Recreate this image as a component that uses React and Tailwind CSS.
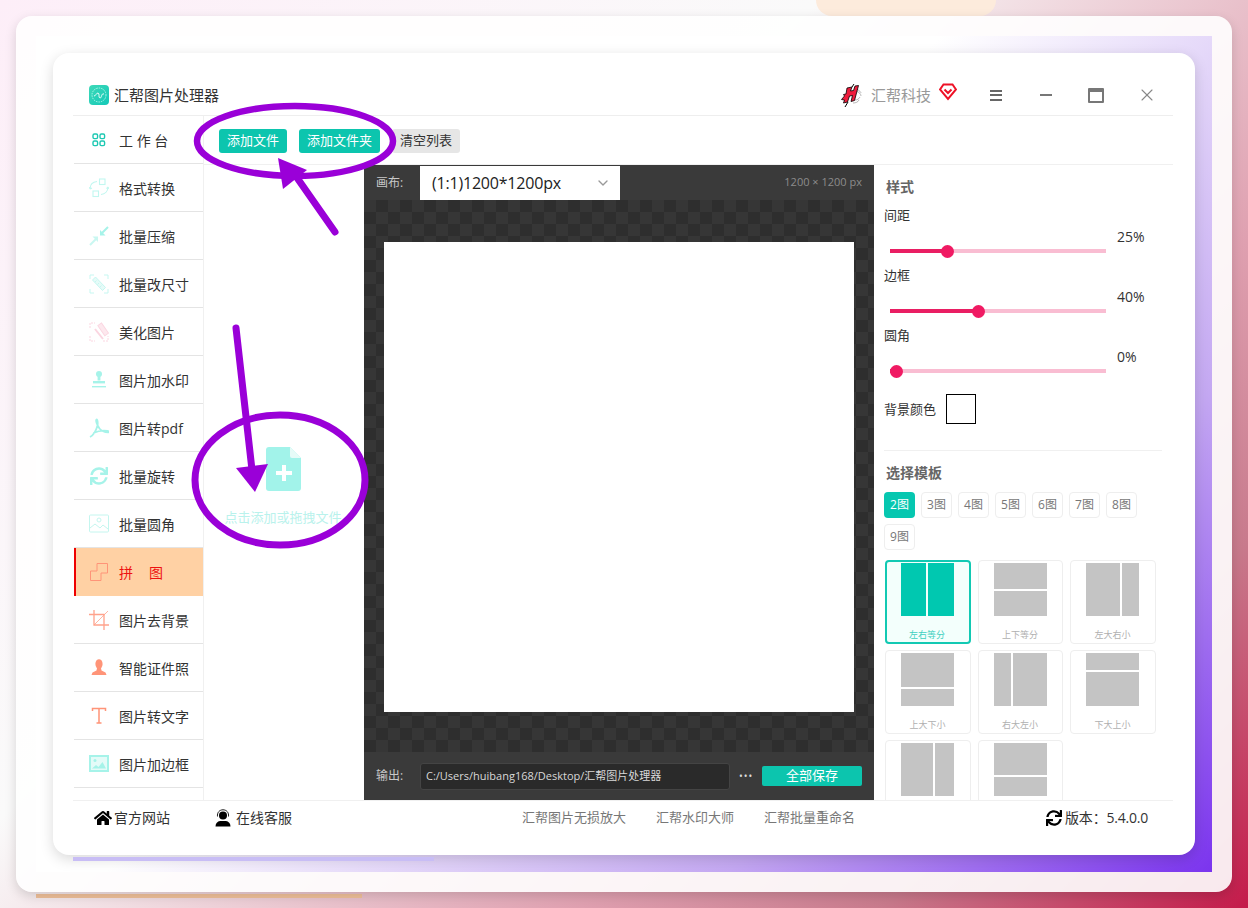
import React from "react";
import { FaSync, FaHome } from "react-icons/fa";
import { ChevronDown, X } from "lucide-react";

const PALE = "#a6f3e9";
const ORANGE = "#ff9478";

// sidebar icons
const GridIcon = () => (
  <svg width="20" height="20" viewBox="0 0 20 20" fill="none" stroke="#1cc8b2" strokeWidth="1.4">
    <rect x="4" y="4" width="4.6" height="4.6" rx="1.4" />
    <rect x="11" y="4" width="4.6" height="4.6" rx="1.4" />
    <rect x="4" y="11" width="4.6" height="4.6" rx="1.4" />
    <rect x="11" y="11" width="4.6" height="4.6" rx="1.4" />
  </svg>
);
const ConvertIcon = () => (
  <svg width="20" height="20" viewBox="0 0 20 20" fill="none" stroke="#c2f7f0" strokeWidth="1.1">
    <rect x="10.5" y="1" width="5.5" height="5.5" />
    <rect x="4" y="13" width="5.5" height="5.5" />
    <path d="M8 3.5C3.5 4 1 7 1.2 11M1.2 11l-1-1.8M1.2 11l1.8-1" />
    <path d="M12 16.500c4-.5 7-3.500 7-7.500M19 9l-1.500 1.600M19 9l1 1.800" />
  </svg>
);
const CompressIcon = () => (
  <svg width="20" height="20" viewBox="0 0 20 20" fill={PALE} stroke={PALE}>
    <path d="M19 1l-6 6" strokeWidth="2" />
    <path d="M11 9.500V4l5.500 5.500z" stroke="none" />
    <g opacity=".6">
      <path d="M1 19l6-6" strokeWidth="2" />
      <path d="M9 10.500V16l-5.500-5.500z" stroke="none" />
    </g>
  </svg>
);
const ResizeIcon = () => (
  <svg width="20" height="20" viewBox="0 0 20 20" fill="none" stroke="#c6f7f1" strokeWidth="1">
    <path d="M1 5V1h4M15 1h4v4M1 15v4h4M15 19h4v-4" />
    <path d="M3.500 6l3-3 10 10.500-3 3z" fill="#e6fbf8" />
    <path d="M6 8l1.500-1.500M8.500 10.500L10 9M11 13l1.500-1.500" />
  </svg>
);
const WandIcon = () => (
  <svg width="20" height="20" viewBox="0 0 20 20" fill="none" stroke="#fbd6e1" strokeWidth="1">
    <path d="M1 6V1h5M1 14v5h5M14 19h5v-5" strokeDasharray="2 1" />
    <path d="M9.500 3l4-2.200 5.500 11-4 2.200z" transform="rotate(-8 14 8)" fill="#fde8ee" />
    <path d="M6 7l8 10" strokeWidth="2" />
  </svg>
);
const StampIcon = () => (
  <svg width="20" height="20" viewBox="0 0 20 20" fill={PALE}>
    <circle cx="10" cy="4" r="3" />
    <path d="M8.600 6h2.800v4.500H8.600z" />
    <path d="M4 11h12v2.400H4z" />
    <path d="M3 16h14v1.400H3z" />
  </svg>
);
const PdfIcon = () => (
  <svg width="20" height="20" viewBox="0 0 20 20" fill="none" stroke={PALE} strokeWidth="1.800">
    <path d="M1 19c3-1.500 6-6 7.500-11.500C9 5 8.500 1 7.500 1.500 6.300 2.200 8 7 10.500 10.500c2 2.500 6 3.800 8.500 3.800 1 0 .8-1.300-.6-1.500-4-.6-10 .3-14 2.200" />
  </svg>
);
const PictureIcon = () => (
  <svg width="20" height="20" viewBox="0 0 20 20" fill="none" stroke="#c4f6ef" strokeWidth="1">
    <rect x=".5" y="1" width="19" height="17" rx="1" />
    <circle cx="10" cy="6" r="2" />
    <path d="M1 14l5-4 5 4 3-3 5 4" />
  </svg>
);
const PuzzleIcon = () => (
  <svg width="20" height="20" viewBox="0 0 20 20" fill="none" stroke={ORANGE} strokeWidth="1">
    <path d="M8 1.500h10.500v9.500H12V18.500H1.500V9H8z" />
  </svg>
);
const CropIcon = () => (
  <svg width="20" height="20" viewBox="0 0 20 20" fill="none" stroke="#ffa28c" strokeWidth="1.300">
    <path d="M5 0v15h15" />
    <path d="M0 4.500h15V20" />
    <path d="M5 15L19 1" strokeWidth=".8" />
  </svg>
);
const PersonIcon = () => (
  <svg width="20" height="20" viewBox="0 0 20 20" fill={ORANGE}>
    <ellipse cx="10" cy="6" rx="3.600" ry="4.800" />
    <path d="M8 10h4l.5 2.500 4 2 1 2.500H2.500l1-2.500 4-2z" />
  </svg>
);
const SerifT = () => (
  <svg width="20" height="20" viewBox="0 0 20 20" fill="none" stroke={ORANGE} strokeWidth="1.500">
    <path d="M3.500 5V2.500h13V5M10 2.500v14.500M7.500 17h5" />
  </svg>
);
const FramedPicture = () => (
  <svg width="20" height="20" viewBox="0 0 20 20">
    <rect x="0" y="1" width="20" height="17" fill={PALE} />
    <rect x="2" y="3" width="16" height="13" fill="#e4fbf8" />
    <path d="M3 14.500l4-3.500 2.500 2 4-5 3.500 6.500z" fill={PALE} />
    <circle cx="6" cy="6.500" r="1.500" fill={PALE} />
  </svg>
);

const menu = [
  { name: "工 作 台", icon: <GridIcon /> },
  { name: "格式转换", icon: <ConvertIcon /> },
  { name: "批量压缩", icon: <CompressIcon /> },
  { name: "批量改尺寸", icon: <ResizeIcon /> },
  { name: "美化图片", icon: <WandIcon /> },
  { name: "图片加水印", icon: <StampIcon /> },
  { name: "图片转pdf", icon: <PdfIcon /> },
  { name: "批量旋转", icon: <FaSync size={18} color={PALE} /> },
  { name: "批量圆角", icon: <PictureIcon /> },
  { name: "拼图", icon: <PuzzleIcon />, active: true },
  { name: "图片去背景", icon: <CropIcon /> },
  { name: "智能证件照", icon: <PersonIcon /> },
  { name: "图片转文字", icon: <SerifT /> },
  { name: "图片加边框", icon: <FramedPicture /> },
];

const sliders = [
  { label: "间距", value: 25, fill: "w-[57px]", thumb: "left-[51px]" },
  { label: "边框", value: 40, fill: "w-[88px]", thumb: "left-[82px]" },
  { label: "圆角", value: 0, fill: "w-[6px]", thumb: "left-0" },
];

const counts = ["2图", "3图", "4图", "5图", "6图", "7图", "8图", "9图"];

const templates = [
  { name: "左右等分", dir: "flex-row", a: "flex-1", b: "flex-1", active: true },
  { name: "上下等分", dir: "flex-col", a: "flex-1", b: "flex-1" },
  { name: "左大右小", dir: "flex-row", a: "flex-[2]", b: "flex-1" },
  { name: "上大下小", dir: "flex-col", a: "flex-[2]", b: "flex-1" },
  { name: "右大左小", dir: "flex-row", a: "flex-1", b: "flex-[2]" },
  { name: "下大上小", dir: "flex-col", a: "flex-1", b: "flex-[2]" },
  { name: "", dir: "flex-row", a: "flex-[31]", b: "flex-[19]" },
  { name: "", dir: "flex-col", a: "flex-[31]", b: "flex-[19]" },
];

const HeadsetUser = () => (
  <svg width="18" height="18" viewBox="0 0 18 18">
    <circle cx="9" cy="6.500" r="4" fill="#000" />
    <path d="M3.500 7.500C3 3.500 5.500.8 9 .8s6 2.700 5.500 6.700" fill="none" stroke="#000" strokeWidth=".9" />
    <path d="M1.500 17.500c0-3.500 2-5 4.500-5.500h6c2.500.5 4.500 2 4.500 5.500z" fill="#000" />
  </svg>
);

const BrandLogo = () => (
  <svg width="23" height="25" viewBox="0 0 23 25">
    <path d="M17 8c3 1 5 3 5 5M15 5c4 1 7 4 7 5M16 17c2 0 4-1 5-3M14 20c3 0 5-1 6-3" fill="none" stroke="#999" strokeWidth=".7" />
    <path d="M8 5l5-1-1.500 4 3-.5 1.500-4.500 3.500-.5-4 15-3.500 1 1.500-6-3 .5-2 6-4 1 1-3-3-.5 3-3.500-1-1.500 2.500-.5z" fill="#ee1c3c" stroke="#000" strokeWidth=".8" />
    <path d="M6 24l3-5M15 1l-2 3" stroke="#000" strokeWidth="1" />
  </svg>
);

const Gem = () => (
  <svg width="18" height="18" viewBox="0 0 18 18" fill="none" stroke="#ee1126" strokeWidth="2">
    <path d="M4.500 1.500h9L17 6.500 9 16 1 6.500z" />
    <path d="M5.500 6.500L9 10l3.500-3.500" />
  </svg>
);

const AppLogo = () => (
  <svg width="20" height="20" viewBox="0 0 20 20">
    <defs>
      <linearGradient id="lg" x1="0" y1="0" x2="1" y2="1">
        <stop offset="0" stopColor="#3fd9b8" />
        <stop offset="1" stopColor="#12c8b8" />
      </linearGradient>
    </defs>
    <rect width="20" height="20" rx="4" fill="url(#lg)" />
    <circle cx="10" cy="10" r="7" fill="none" stroke="#c8fff2" strokeWidth=".8" strokeDasharray="1.500 1" />
    <path d="M5 11c2 0 2-3 4-3s0 5 2 5 1-5 4-4" fill="none" stroke="#fff" strokeWidth=".9" />
  </svg>
);

// purple marks drawn over the screenshot
const Annotations = () => (
  <svg className="absolute left-0 top-0 pointer-events-none" width="1248" height="908" fill="none">
    <ellipse cx="295" cy="141" rx="98" ry="35" stroke="#9a00d8" strokeWidth="6.500" />
    <path d="M335 232L293 172" stroke="#9a00d8" strokeWidth="7" strokeLinecap="round" />
    <path d="M278 158L283 189L307 170z" fill="#9a00d8" />
    <ellipse cx="280" cy="480" rx="85" ry="65" stroke="#9a00d8" strokeWidth="7" />
    <path d="M236 328L252 470" stroke="#9a00d8" strokeWidth="7" strokeLinecap="round" />
    <path d="M236 468L268 464L255 492z" fill="#9a00d8" />
  </svg>
);

export default function App() {
  return (
    <div className="relative w-full h-[908px] overflow-hidden p-4 bg-[linear-gradient(135deg,#fdeef8_0%,#fafafa_38%,#dfa0b0_69%,#c87a8c_83%,#c41a4a_100%)] font-['Open_Sans','Noto_Sans_CJK_SC',sans-serif] text-[#333]">
      {/* decoration behind the cards */}
      <div className="absolute left-[816px] top-0 w-[180px] h-4 rounded-b-2xl bg-[#fdebdc]" />
      <div className="absolute left-[36px] top-[894px] w-[326px] h-1 bg-[#f0c09a]" />

      <div className="relative h-full rounded-2xl bg-white/90 p-5 shadow-[0_4px_12px_rgba(0,0,0,0.15)]">
        <div className="h-full p-[17px] bg-[linear-gradient(135deg,#ffffff_45%,#c4a8f2_76%,#7b34ee_100%)]">
          <div className="h-full rounded-2xl bg-white pl-5 pr-[22px] pt-5 shadow-[0_4px_14px_rgba(0,0,0,0.15)] flex flex-col">
            {/* title bar */}
            <div className="h-[43px] shrink-0 border-b border-[#eeeeee] flex items-center pt-[2px]">
              <div className="ml-4 mr-[5px]">
                <AppLogo />
              </div>
              <span className="text-[15px]">汇帮图片处理器</span>
              <div className="ml-[620px] flex items-center">
                <BrandLogo />
                <span className="ml-[9px] text-[15px] text-[#999]">汇帮科技</span>
                <span className="ml-[8px] -mt-[6px]"><Gem /></span>
                <span className="ml-[33px] flex flex-col gap-[2.500px]">
                  <span className="block w-3 h-[2px] bg-[#666]" />
                  <span className="block w-3 h-[2px] bg-[#666]" />
                  <span className="block w-3 h-[2px] bg-[#666]" />
                </span>
                <span className="ml-[38px] block w-3 h-[2px] bg-[#777]" />
                <span className="ml-[36px] block w-4 h-[15px] border-2 border-t-4 border-[#777] rounded-[1px]" />
                <X size={20} color="#888" strokeWidth={1.300} className="ml-[33px]" />
              </div>
            </div>

            {/* main area */}
            <div className="h-[684px] shrink-0 flex overflow-hidden">
              <div className="w-[130px] shrink-0 ml-px border-r border-[#f0f0f0]">
                {menu.map((item) => (
                  <div
                    key={item.name}
                    className={
                      item.active
                        ? "h-12 flex items-center pl-[13px] border-l-2 border-[#ee0000] bg-[#ffd1a4] text-[#ee1111]"
                        : "h-12 flex items-center pl-[15px] border-b border-[#e4e4e4]"
                    }
                  >
                    <span className="w-5 h-5 mr-[10px] flex items-center justify-center">{item.icon}</span>
                    {item.active ? (
                      <span className="mt-[2px] text-sm tracking-[16px]">{item.name}</span>
                    ) : (
                      <span className="mt-[2px] text-sm">{item.name}</span>
                    )}
                  </div>
                ))}
              </div>

              <div className="flex-1 min-w-0 flex flex-col">
                {/* toolbar */}
                <div className="h-[49px] shrink-0 border-b border-[#f0f0f0] flex items-center gap-3 pl-[15px] pt-[2px]">
                  <button className="h-6 px-2 rounded-[3px] bg-[#0cc5ae] text-white text-[13px]">添加文件</button>
                  <button className="h-6 px-2 rounded-[3px] bg-[#0cc5ae] text-white text-[13px]">添加文件夹</button>
                  <button className="h-6 px-2 rounded-[3px] bg-[#e6e6e6] text-[#333] text-[13px]">清空列表</button>
                </div>

                <div className="flex-1 min-h-0 flex">
                  {/* file list */}
                  <div className="w-[160px] shrink-0 flex flex-col items-center pt-[282px] pr-[2px]">
                    <svg width="36" height="44" viewBox="0 0 36 44" className="ml-[2px]">
                      <path d="M3 0h21l11 11v30a3 3 0 0 1-3 3H3a3 3 0 0 1-3-3V3a3 3 0 0 1 3-3z" fill="#a2f3ea" />
                      <path d="M24 0l11 11H26a2 2 0 0 1-2-2z" fill="#e6fbf8" />
                      <path d="M16 18h4v6h6v4h-6v6h-4v-6h-6v-4h6z" fill="#fff" />
                    </svg>
                    <span className="mt-[17px] text-[13px] text-[#b9f2ec]">点击添加或拖拽文件</span>
                  </div>

                  {/* canvas */}
                  <div className="w-[510px] shrink-0 flex flex-col bg-[#3a3a3a]">
                    <div className="h-[35px] shrink-0 flex items-center pl-3 pr-3">
                      <span className="w-[44px] text-xs text-[#c8c8c8]">画布:</span>
                      <div className="w-[200px] h-[34px] mt-px bg-white flex items-center justify-between pl-3 pr-[9px] text-base tracking-[-0.2px] text-[#222]">
                        <span>(1:1)1200*1200px</span>
                        <ChevronDown size={16} color="#999" />
                      </div>
                      <span className="ml-auto text-[11px] text-[#8c8c8c]">1200 × 1200 px</span>
                    </div>
                    <div className="h-[552px] shrink-0 pt-[42px] px-5 bg-[repeating-conic-gradient(#2e2e2e_0_25%,#363636_0_50%)] bg-[length:24px_24px]">
                      <div className="w-[470px] h-[470px] bg-white" />
                    </div>
                    <div className="flex-1 flex items-center pl-3 pr-3">
                      <span className="w-[44px] text-xs text-[#c8c8c8]">输出:</span>
                      <div className="w-[310px] h-[27px] flex items-center pl-[5px] bg-[#2a2a2a] border border-[#444] rounded-[3px] text-[11px] text-[#d8d8d8]">
                        C:/Users/huibang168/Desktop/汇帮图片处理器
                      </div>
                      <span className="ml-[9px] w-[23px] text-[10px] tracking-[1px] text-[#ddd]">•••</span>
                      <button className="w-[100px] h-5 rounded-[2px] bg-[#0cc5ae] text-white text-[13px] flex items-center justify-center">全部保存</button>
                    </div>
                  </div>

                  {/* right panel */}
                  <div className="flex-1 min-w-0 overflow-hidden pt-3">
                    <div className="pl-3 text-sm leading-5 font-bold text-[#666]">样式</div>
                    <div className="mt-[9px]">
                      {sliders.map((s) => (
                        <div key={s.label}>
                          <div className="h-5 pl-[10px] text-[13px] leading-[18px]">{s.label}</div>
                          <div className="relative h-10">
                            <div className="absolute left-4 top-[23px] w-[216px] h-1 bg-[#f9bdd2]">
                              <div className={`${s.fill} h-full bg-[#e91e63]`} />
                              <div className={`absolute top-[-4.500px] w-[13px] h-[13px] rounded-full bg-[#f01a63] ${s.thumb}`} />
                            </div>
                            <span className="absolute left-[243px] top-px text-sm leading-5">{s.value}%</span>
                          </div>
                        </div>
                      ))}
                    </div>
                    <div className="mt-2 pl-[10px] flex items-center gap-[10px]">
                      <span className="pt-[2px] text-[13px]">背景颜色</span>
                      <span className="block w-[30px] h-[30px] border border-black bg-white" />
                    </div>
                    <div className="mt-[26px] ml-[10px] mr-[11px] h-px bg-[#f0f0f0]" />
                    <div className="mt-3 pl-3 text-sm leading-5 font-bold text-[#666]">选择模板</div>
                    <div className="mt-[9px] pl-[10px] flex flex-wrap gap-[6px] w-[270px]">
                      {counts.map((c, i) => (
                        <span
                          key={c}
                          className={
                            i === 0
                              ? "w-[31px] h-[26px] rounded-[4px] bg-[#06c7b0] text-white text-xs flex items-center justify-center"
                              : "w-[31px] h-[26px] rounded-[4px] border border-[#eeeeee] text-[#777] text-xs flex items-center justify-center"
                          }
                        >
                          {c}
                        </span>
                      ))}
                    </div>
                    <div className="mt-[10px] pl-[11px] grid grid-cols-[86px_85px_86px] gap-x-[7px] gap-y-[6px]">
                      {templates.map((t, i) => (
                        <div
                          key={i}
                          className={
                            t.active
                              ? "h-[84px] rounded-[4px] border-2 border-[#12c9b3] bg-[#f3fffc] flex flex-col items-center pt-px pr-[2px]"
                              : "h-[84px] rounded-[4px] border border-[#eeeeee] flex flex-col items-center pt-[2px] pr-px"
                          }
                        >
                          <div className={`w-[53px] h-[53px] shrink-0 flex gap-[2px] ${t.dir}`}>
                            <div className={`${t.a} ${t.active ? "bg-[#00c8b0]" : "bg-[#c4c4c4]"}`} />
                            <div className={`${t.b} ${t.active ? "bg-[#00c8b0]" : "bg-[#c4c4c4]"}`} />
                          </div>
                          <span className={`mt-[13px] text-[9px] leading-3 ${t.active ? "text-[#3fd0c0]" : "text-[#b0b0b0]"}`}>{t.name}</span>
                        </div>
                      ))}
                    </div>
                  </div>
                </div>
              </div>
            </div>

            {/* footer */}
            <div className="h-9 shrink-0 border-t border-[#f0f0f0] flex items-center pl-[21px] pb-[2px] text-sm">
              <FaHome size={18} color="#000" />
              <span className="ml-[2px]">官方网站</span>
              <span className="ml-[44px]"><HeadsetUser /></span>
              <span className="ml-[4px]">在线客服</span>
              <span className="ml-[230px] text-[13px] text-[#777]">汇帮图片无损放大</span>
              <span className="ml-[30px] text-[13px] text-[#777]">汇帮水印大师</span>
              <span className="ml-[30px] text-[13px] text-[#777]">汇帮批量重命名</span>
              <FaSync size={16} color="#000" className="ml-[191px]" />
              <span className="ml-[3px] tracking-[-0.2px]">版本：5.4.0.0</span>
            </div>
          </div>
        </div>
      </div>

      <div className="absolute left-[73px] top-[857px] w-[361px] h-1 bg-[#c8bdf5]" />
      <Annotations />
    </div>
  );
}
